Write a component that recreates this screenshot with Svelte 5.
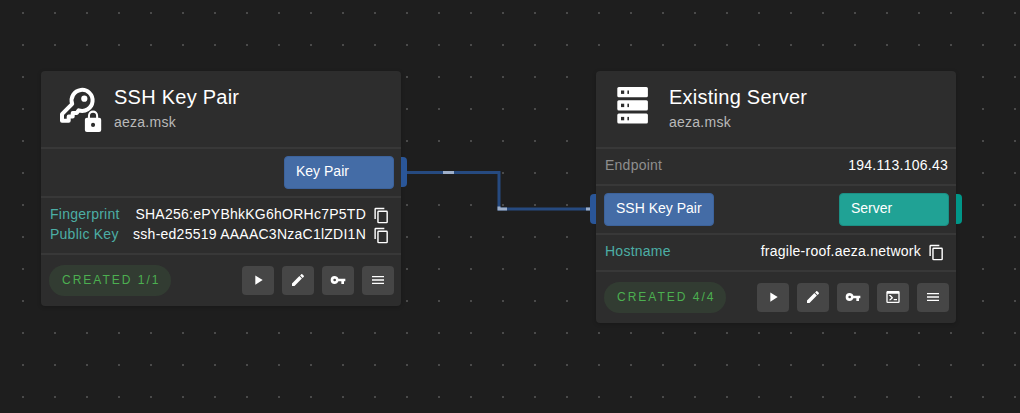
<script>
  const icons = {
    play: 'M8,5.14V19.14L19,12.14L8,5.14Z',
    edit: 'M20.71,7.04C21.1,6.65 21.1,6 20.71,5.63L18.37,3.29C18,2.9 17.35,2.9 16.96,3.29L15.12,5.12L18.87,8.87M3,17.25V21H6.75L17.81,9.93L14.06,6.18L3,17.25Z',
    key: 'M7,14A2,2 0 0,1 5,12A2,2 0 0,1 7,10A2,2 0 0,1 9,12A2,2 0 0,1 7,14M12.65,10C11.83,7.67 9.61,6 7,6A6,6 0 0,0 1,12A6,6 0 0,0 7,18C9.61,18 11.83,16.33 12.65,14H17V18H21V14H23V10H12.65Z',
    console: 'M20,19V7H4V19H20M20,3A2,2 0 0,1 22,5V19A2,2 0 0,1 20,21H4A2,2 0 0,1 2,19V5C2,3.89 2.9,3 4,3H20M13,17V15H18V17H13M9.58,13L5.57,9H8.4L11.7,12.3C12.09,12.69 12.09,13.33 11.7,13.72L8.42,17H5.59L9.58,13Z',
    menu: 'M3,6H21V8H3V6M3,11H21V13H3V11M3,16H21V18H3V16Z',
    copy: 'M19,21H8V7H19M19,5H8A2,2 0 0,0 6,7V21A2,2 0 0,0 8,23H19A2,2 0 0,0 21,21V7A2,2 0 0,0 19,5M16,1H4A2,2 0 0,0 2,3V17H4V3H16V1Z'
  };
  const labels = { play: 'Run', edit: 'Edit', key: 'Secrets', console: 'Console', menu: 'Menu' };

  const nodes = [
    {
      x: 41, y: 71, icon: 'keypair', title: 'SSH Key Pair', subtitle: 'aeza.msk',
      info: [],
      input: null,
      output: { name: 'Key Pair', kind: 'blue' },
      props: [
        { name: 'Fingerprint', value: 'SHA256:ePYBhkKG6hORHc7P5TD' },
        { name: 'Public Key', value: 'ssh-ed25519 AAAAC3NzaC1lZDI1N' }
      ],
      status: 'CREATED 1/1',
      actions: ['play', 'edit', 'key', 'menu']
    },
    {
      x: 596, y: 71, icon: 'server', title: 'Existing Server', subtitle: 'aeza.msk',
      info: [{ name: 'Endpoint', value: '194.113.106.43' }],
      input: { name: 'SSH Key Pair', kind: 'blue' },
      output: { name: 'Server', kind: 'teal' },
      props: [{ name: 'Hostname', value: 'fragile-roof.aeza.network' }],
      status: 'CREATED 4/4',
      actions: ['play', 'edit', 'key', 'console', 'menu']
    }
  ];
</script>

<main class="canvas">
  <svg class="edges" aria-hidden="true">
    <path class="edge" d="M404 172.5H499V209H594" />
    <path class="pulse" d="M443 172.5H454M499 206.500V209H507M586 209H592" />
  </svg>

  {#each nodes as node}
    <article class="node" style="left:{node.x}px;top:{node.y}px">
      <header>
        {#if node.icon === 'keypair'}
          <svg class="logo" viewBox="0 0 48 48" aria-hidden="true">
            <path d="M14.200 23.900A10.500 10.500 0 1 1 20.700 30.300L18.700 33H14.700V36.500H10.700V40.800H4V34.200Z" fill="none" stroke="#fff" stroke-width="4" stroke-linejoin="round" />
            <circle cx="26.300" cy="18.700" r="3.100" fill="#fff" />
            <path transform="translate(22.800 29.600) scale(1.020)" fill="#fff" stroke="#2d2d2d" stroke-width="1" paint-order="stroke" d="M12,17A2,2 0 0,0 14,15C14,13.89 13.1,13 12,13A2,2 0 0,0 10,15A2,2 0 0,0 12,17M18,8A2,2 0 0,1 20,10V20A2,2 0 0,1 18,22H6A2,2 0 0,1 4,20V10C4,8.89 4.9,8 6,8H7V6A5,5 0 0,1 12,1A5,5 0 0,1 17,6V8H18M12,3A3,3 0 0,0 9,6V8H15V6A3,3 0 0,0 12,3Z" />
          </svg>
        {:else}
          <svg class="logo" viewBox="0 0 48 48" aria-hidden="true">
            {#each [7, 20.2, 33.4] as y}
              <rect x="4.300" {y} width="30.600" height="10.200" rx="1.500" fill="#fff" />
              <rect x="8" y={y + 3.500} width="3.200" height="3.400" fill="#2d2d2d" />
              <rect x="14.400" y={y + 3.500} width="1.600" height="3.400" fill="#2d2d2d" />
            {/each}
          </svg>
        {/if}
        <div class="heading">
          <h2>{node.title}</h2>
          <p>{node.subtitle}</p>
        </div>
      </header>

      {#if node.info.length}
        <dl class="section">
          {#each node.info as item}
            <div class="row"><dt>{item.name}</dt><dd>{item.value}</dd></div>
          {/each}
        </dl>
      {/if}

      <div class="sockets">
        {#if node.input}
          <div class="socket {node.input.kind}">{node.input.name}</div>
          <i class="port left {node.input.kind}"></i>
        {/if}
        <div class="socket out {node.output.kind}">{node.output.name}</div>
        <i class="port right {node.output.kind}"></i>
      </div>

      <dl class="section outputs">
        {#each node.props as item}
          <div class="row">
            <dt>{item.name}</dt>
            <dd>
              <span>{item.value}</span>
              <button class="copy" aria-label="Copy {item.name}">
                <svg viewBox="0 0 24 24"><path d={icons.copy} /></svg>
              </button>
            </dd>
          </div>
        {/each}
      </dl>

      <footer>
        <span class="status">{node.status}</span>
        <div class="actions">
          {#each node.actions as action}
            <button class="action" aria-label={labels[action]}>
              <svg viewBox="0 0 24 24"><path d={icons[action]} /></svg>
            </button>
          {/each}
        </div>
      </footer>
    </article>
  {/each}
</main>

<style>
  :global(body) { margin: 0; background: #1e1e1e; }
  .canvas {
    position: relative;
    min-height: 100vh;
    overflow: hidden;
    background: #1e1e1e radial-gradient(circle at 23px 13px, #4a4a4a 1px, transparent 1px) 0 0 / 32px 32px;
    font: 14px/20px "Liberation Sans", Arial, sans-serif;
    letter-spacing: 0.0178em;
    color: #fff;
  }
  .edges { position: absolute; inset: 0; width: 100%; height: 100%; }
  .edge { fill: none; stroke: #264a80; stroke-width: 3; }
  .pulse { fill: none; stroke: #9eafc9; stroke-width: 3; }
  .node {
    position: absolute;
    width: 360px;
    border-radius: 4px;
    background: #2d2d2d;
    box-shadow: 0 1px 4px rgba(0, 0, 0, 0.2);
  }
  header { display: flex; gap: 8px; height: 48px; padding: 9px 15px 19px 17px; }
  .logo { width: 48px; height: 48px; overflow: visible; }
  .heading { display: flex; flex-direction: column; padding-top: 5px; }
  h2 { margin: 0; font-size: 20px; line-height: 24px; font-weight: 400; letter-spacing: 0.0125em; }
  p { margin: 0; padding-top: 3px; color: #b9b9b9; }
  .section, .sockets, footer { margin: 0; border-top: 2px solid #383838; }
  .section { padding: 6px 8px 9px 9px; }
  .row { display: flex; justify-content: space-between; }
  dt { color: #8f8f8f; }
  .outputs dt { color: #4caea5; }
  dd { display: flex; margin: 0; align-items: center; gap: 7px; white-space: nowrap; }
  .sockets { position: relative; display: flex; padding: 7px 7px 7px 8px; letter-spacing: normal; }
  .socket {
    box-sizing: border-box;
    width: 110px;
    height: 33px;
    padding: 4px 11px;
    border: 1px solid;
    border-radius: 4px;
    color: #fff;
    white-space: nowrap;
  }
  .socket.out { margin-left: auto; }
  .socket.blue { background: #446ca6; border-color: #3c629b; }
  .socket.teal { background: #20a295; border-color: #1b8f84; }
  .port { position: absolute; top: 8px; width: 6px; height: 30px; }
  .port.left { right: 100%; border-radius: 4px 0 0 4px; }
  .port.right { left: 100%; border-radius: 0 4px 4px 0; }
  .port.blue { background: #2a5698; }
  .port.teal { background: #009688; }
  button { padding: 0; border: 0; color: inherit; cursor: pointer; }
  svg { display: block; }
  button svg { width: 16px; height: 16px; fill: currentColor; }
  .copy { padding: 2px 3px 0 0; background: none; }
  .copy svg { width: 17px; height: 17px; }
  footer { display: flex; align-items: center; justify-content: space-between; padding: 10px 7px 10px 8px; }
  .status {
    padding: 0 11px 0 13px;
    border-radius: 16px;
    background: #323c32;
    color: #4caf50;
    font-size: 12px;
    line-height: 31px;
    letter-spacing: 2px;
  }
  .actions { display: flex; gap: 8px; }
  .action {
    box-sizing: border-box;
    display: flex;
    justify-content: center;
    align-items: center;
    width: 32px;
    height: 29px;
    padding-bottom: 2px;
    border-radius: 4px;
    background: #464646;
  }
</style>
